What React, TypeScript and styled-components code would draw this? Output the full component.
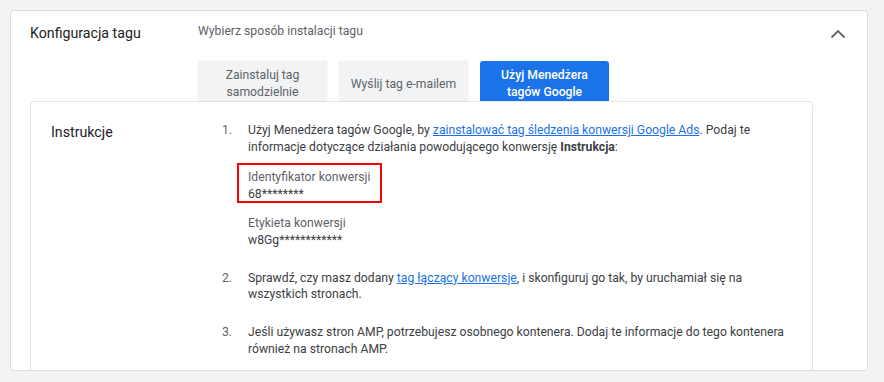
import React from "react";
import styled, { createGlobalStyle } from "styled-components";

const Global = createGlobalStyle`
  html, body { margin: 0; padding: 0; background: #f1f3f4; }
  body { font-family: Roboto, "Noto Sans", Arial, sans-serif; -webkit-font-smoothing: antialiased; }
`;

const Page = styled.div`
  padding: 10px 16px 0 10px;
  height: 382px;
  box-sizing: border-box;
  overflow: hidden;
`;

const Card = styled.section`
  width: 858px;
  height: 361px;
  box-sizing: border-box;
  background: #fff;
  border: 1px solid #dadce0;
  border-radius: 4px;
  padding: 0 22px 0 19px;
  overflow: hidden;
`;

const Header = styled.div`
  display: grid;
  grid-template-columns: 168px 1fr auto;
  padding-top: 12px;
`;

const Title = styled.h2`
  margin: 0;
  font-size: 14.2px;
  line-height: 20px;
  font-weight: 400;
  color: #202124;
`;

const Column = styled.div`
  display: flex;
  flex-direction: column;
`;

const Subtitle = styled.div`
  font-size: 12.2px;
  line-height: 17px;
  color: #5f6368;
`;

const Tabs = styled.div`
  display: flex;
  gap: 12px;
  margin-top: 21px;
`;

const Tab = styled.button<{ $active?: boolean }>`
  width: 129px;
  height: 40px;
  box-sizing: border-box;
  border: none;
  border-radius: 3px 3px 0 0;
  padding: 6px 8px 0;
  font-family: inherit;
  font-size: 12.2px;
  line-height: 17px;
  text-align: center;
  display: block;
  overflow: hidden;
  background: ${(p) => (p.$active ? "#1a73e8" : "#f1f3f4")};
  color: ${(p) => (p.$active ? "#ffffff" : "#5f6368")};
  font-weight: ${(p) => (p.$active ? 500 : 400)};
  box-shadow: ${(p) => (p.$active ? "none" : "0 0 1px rgba(60,64,67,0.3)")};
`;

const Chevron = styled.svg`
  width: 16px;
  height: 10px;
  margin-top: 6px;
  margin-right: -1px;
`;

const Panel = styled.div`
  width: 783px;
  box-sizing: border-box;
  background: #fff;
  border: 1px solid #e3e5e8;
  border-radius: 4px;
  box-shadow: 0 1px 1px rgba(60, 64, 67, 0.12);
  display: grid;
  grid-template-columns: 171px 1fr;
  padding: 20px 20px 14px 20px;
`;

const PanelLabel = styled.div`
  font-size: 14.2px;
  line-height: 20px;
  color: #202124;
`;

const Steps = styled.ol`
  margin: 0;
  padding: 0;
  list-style: none;
  width: 566px;
  display: flex;
  flex-direction: column;
  gap: 21.5px;
`;

const Step = styled.li`
  display: grid;
  grid-template-columns: 26px 1fr;
  font-size: 12.2px;
  line-height: 16.5px;
  color: #3c4043;
`;

const Num = styled.span`
  color: #5f6368;
`;

const Body = styled.div`
  display: flex;
  flex-direction: column;
`;

const Link = styled.a`
  color: #1a73e8;
  text-decoration: underline;
`;

const Fields = styled.div`
  display: flex;
  flex-direction: column;
  gap: 13px;
  margin-top: 14px;
`;

const Field = styled.div`
  position: relative;
  display: flex;
  flex-direction: column;
  color: #5f6368;
`;

const Value = styled.span`
  color: #3c4043;
`;

const Highlight = styled.span`
  position: absolute;
  left: -11px;
  top: -6px;
  width: 145px;
  height: 40px;
  box-sizing: border-box;
  border: 2px solid #f00;
`;

export default function App() {
  return (
    <>
      <Global />
      <Page>
        <Card>
          <Header>
            <Title>Konfiguracja tagu</Title>
            <Column>
              <Subtitle>Wybierz sposób instalacji tagu</Subtitle>
              <Tabs>
                <Tab>Zainstaluj tag samodzielnie</Tab>
                <Tab>Wyślij tag e-mailem</Tab>
                <Tab $active>Użyj Menedżera tagów Google</Tab>
              </Tabs>
            </Column>
            <Chevron viewBox="0 0 16 10">
              <polyline
                points="1.5,8.5 8,2 14.5,8.5"
                fill="none"
                stroke="#5f6368"
                strokeWidth="1.8"
              />
            </Chevron>
          </Header>
          <Panel>
            <PanelLabel>Instrukcje</PanelLabel>
            <Steps>
              <Step>
                <Num>1.</Num>
                <Body>
                  <span>
                    Użyj Menedżera tagów Google, by{" "}
                    <Link>zainstalować tag śledzenia konwersji Google Ads</Link>. Podaj te
                    informacje dotyczące działania powodującego konwersję{" "}
                    <b>Instrukcja</b>:
                  </span>
                  <Fields>
                    <Field>
                      <Highlight />
                      <span>Identyfikator konwersji</span>
                      <Value>68********</Value>
                    </Field>
                    <Field>
                      <span>Etykieta konwersji</span>
                      <Value>w8Gg************</Value>
                    </Field>
                  </Fields>
                </Body>
              </Step>
              <Step>
                <Num>2.</Num>
                <Body>
                  <span>
                    Sprawdź, czy masz dodany <Link>tag łączący konwersje</Link>, i
                    skonfiguruj go tak, by uruchamiał się na wszystkich stronach.
                  </span>
                </Body>
              </Step>
              <Step>
                <Num>3.</Num>
                <Body>
                  <span>
                    Jeśli używasz stron AMP, potrzebujesz osobnego kontenera. Dodaj te
                    informacje do tego kontenera również na stronach AMP.
                  </span>
                </Body>
              </Step>
            </Steps>
          </Panel>
        </Card>
      </Page>
    </>
  );
}
